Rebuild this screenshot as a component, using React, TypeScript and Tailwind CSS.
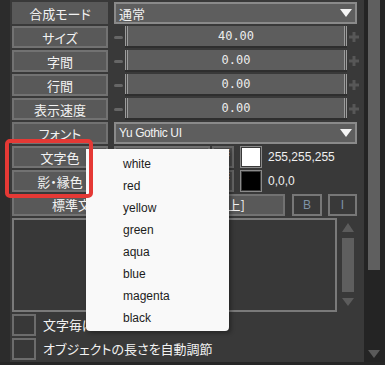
import React from 'react';

const jp = "font-['Noto_Sans_CJK_JP','Noto_Sans',sans-serif] [font-feature-settings:'palt']";
const mono = "font-['DejaVu_Sans_Mono',monospace]";
const sans = "font-['Liberation_Sans','Noto_Sans_CJK_JP',sans-serif]";

const Label = ({ text, flat = false, w = 'w-[96px]' }: { text: string; flat?: boolean; w?: string }) => (
  <div
    className={`${w} h-[22px] shrink-0 flex items-center justify-center bg-[#595959] text-[13px] text-[#f2f2f2] leading-none ${jp} ${
      flat ? '' : 'border-2 border-[#727272]'
    }`}
  >
    {text}
  </div>
);

const Caret = () => (
  <svg width="12" height="8" viewBox="0 0 12 8" className="shrink-0">
    <path d="M0 0h12L6 8z" fill="#f4f4f4" />
  </svg>
);

const Dropdown = ({ text, w, font }: { text: string; w: string; font: string }) => (
  <div className={`${w} h-[22px] shrink-0 flex items-center justify-between pl-[3px] pr-[3px] bg-[#5e5e5e] border-2 border-[#8a8a8a] text-[#f2f2f2] leading-none ${font}`}>
    <span>{text}</span>
    <Caret />
  </div>
);

const SliderRow = ({ label, value }: { label: string; value: string }) => (
  <div className="flex h-[22px] items-stretch">
    <Label text={label} />
    <div className="w-[17px] flex items-center pl-[6px]">
      <div className="w-[9px] h-[3px] rounded-full bg-[#666666]" />
    </div>
    <div className="w-[222px] flex bg-[#5d5d5d] border-b-2 border-[#2e2e2e]">
      <div className="w-[1px] bg-[#9c9c9c]" />
      <div className="w-[1px] bg-[#474747]" />
      <div className="w-[1px] bg-[#9c9c9c]" />
      <div className={`flex-1 flex items-center justify-center text-[12px] text-[#ececec] ${mono}`}>{value}</div>
      <div className="w-[1px] bg-[#9c9c9c]" />
      <div className="w-[1px] bg-[#474747]" />
      <div className="w-[1px] bg-[#9c9c9c]" />
    </div>
    <div className="w-[15px] flex items-center pl-[2px]">
      <svg width="10" height="10" viewBox="0 0 10 10">
        <path d="M3.5 0h3v3.5H10v3H6.5V10h-3V6.5H0v-3h3.5z" fill="#575757" />
      </svg>
    </div>
  </div>
);

const ColorRow = ({ label, swatch, value }: { label: string; swatch: string; value: string }) => (
  <div className="flex h-[22px] items-center">
    <Label text={label} />
    <div className="ml-[6px] w-[96px] h-[22px] bg-[#5a5a5a] border-2 border-[#727272]" />
    <div className="ml-[2px] w-[22px] h-[22px] bg-[#4a4a4a] border-2 border-[#666666] flex justify-end items-start pr-[2px] pt-[1px]">
      <span className="text-[8px] text-[#dcdcdc] leading-none">⁝</span>
    </div>
    <div className="ml-[6px] w-[22px] h-[22px] border border-[#8a8a8a] p-[1px] bg-[#3a3a3a]">
      <div className={`w-full h-full ${swatch}`} />
    </div>
    <span className={`ml-[6px] text-[12px] text-[#f0f0f0] ${sans}`}>{value}</span>
  </div>
);

const CheckRow = ({ text, clip }: { text: string; clip?: string }) => (
  <div className="flex h-[22px] items-center">
    <div className="w-[24px] h-[22px] shrink-0 border-2 border-[#6c6c6c] bg-[#383838]" />
    <span className={`ml-[7px] text-[13px] text-[#f2f2f2] whitespace-nowrap overflow-hidden ${clip ?? ''} ${jp}`}>{text}</span>
  </div>
);

const colors = ['white', 'red', 'yellow', 'green', 'aqua', 'blue', 'magenta', 'black'];

export default function App() {
  return (
    <div className="relative w-[385px] h-[365px] overflow-hidden bg-[#393939] flex flex-col">
      <div className="flex h-[362px]">
        <div className="w-[10px] bg-[#2c2c2c]" />
        <div className="w-[354px] pl-[2px] pt-[2px] flex flex-col gap-[2px]">
          <div className="flex h-[22px] gap-[6px]">
            <Label text="合成モード" flat />
            <Dropdown text="通常" w="w-[243px]" font={`text-[13px] ${jp}`} />
          </div>
          <SliderRow label="サイズ" value="40.00" />
          <SliderRow label="字間" value="0.00" />
          <SliderRow label="行間" value="0.00" />
          <SliderRow label="表示速度" value="0.00" />
          <div className="flex h-[22px] gap-[6px]">
            <Label text="フォント" />
            <Dropdown text="Yu Gothic UI" w="w-[243px]" font={`text-[12px] tracking-[-0.4px] ${sans}`} />
          </div>
          <ColorRow label="文字色" swatch="bg-white" value="255,255,255" />
          <ColorRow label="影・縁色" swatch="bg-black" value="0,0,0" />
          <div className="flex h-[22px] items-center">
            <div className={`w-[132px] h-[22px] flex items-center justify-center bg-[#595959] border-2 border-[#727272] text-[13px] text-[#f2f2f2] ${jp}`}>
              標準文字
            </div>
            <div className={`ml-[4px] w-[137px] h-[22px] flex items-center justify-end pr-[38px] bg-[#595959] border-2 border-[#727272] text-[13px] text-[#f2f2f2] ${jp}`}>
              左寄せ[上]
            </div>
            <div className={`ml-[7px] w-[30px] h-[22px] flex items-center justify-center border-2 border-[#777777] text-[12px] text-[#7f93a6] ${sans}`}>B</div>
            <div className={`ml-[6px] w-[29px] h-[22px] flex items-center justify-center border-2 border-[#777777] text-[12px] text-[#7f93a6] ${sans}`}>I</div>
          </div>
          <div className="flex h-[94px]">
            <div className="w-[325px] h-full border-2 border-[#7a7a7a] bg-[#383838]" />
            <div className="ml-[5px] w-[12px] flex flex-col items-center pt-[5px]">
              <svg width="12" height="9" viewBox="0 0 12 9">
                <path d="M6 0l6 9H0z" fill="#5c5c5c" />
              </svg>
              <div className="mt-[6px] w-[12px] h-[54px] bg-[#5f5f5f]" />
              <svg width="12" height="8" viewBox="0 0 12 8" className="mt-[6px]">
                <path d="M0 0h12L6 8z" fill="#5c5c5c" />
              </svg>
            </div>
          </div>
          <CheckRow text="文字毎に個別オブジェクト" clip="w-[43px]" />
          <CheckRow text="オブジェクトの長さを自動調節" />
        </div>
        <div className="w-[21px] bg-[#242424] flex flex-col items-start pl-[4px]">
          <div className="w-[12px] h-[270px] bg-[#5f5f5f]" />
          <div className="flex-1" />
          <svg width="12" height="8" viewBox="0 0 12 8" className="mb-[4px]">
            <path d="M0 0h12L6 8z" fill="#5a5a5a" />
          </svg>
        </div>
      </div>
      <div className="h-[3px] bg-[#262626]" />

      {/* dropdown popup */}
      <div className="absolute left-[86px] top-[149px] w-[143px] h-[182px] bg-[#f9f9f9] rounded-b-[4px] shadow-[2px_2px_4px_rgba(0,0,0,0.35)] pt-[4px]">
        {colors.map((c) => (
          <div key={c} className={`h-[22px] flex items-center pl-[37px] text-[12px] text-[#1c1c1c] ${sans}`}>
            {c}
          </div>
        ))}
      </div>

      {/* highlight */}
      <div className="absolute left-[5px] top-[139px] w-[88px] h-[59px] border-4 border-[#e53935] rounded-[5px]" />
    </div>
  );
}
